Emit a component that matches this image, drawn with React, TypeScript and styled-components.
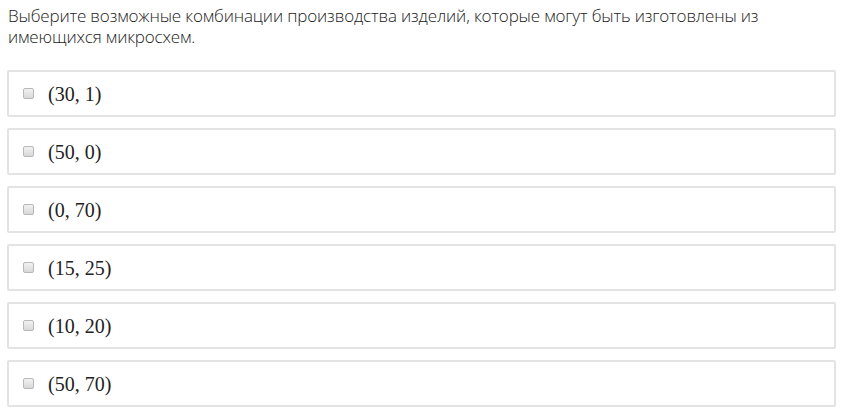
import React from "react";
import styled, { createGlobalStyle } from "styled-components";

const Global = createGlobalStyle`
  html, body { margin: 0; padding: 0; background: #fff; }
  body { font-family: "Open Sans", "Noto Sans", sans-serif; }
`;

const Page = styled.div`
  padding: 5px 6px 0 7px;
  width: 829px;
`;

const Question = styled.p`
  margin: 0 0 0 1px;
  font-size: 17px;
  font-weight: 300;
  line-height: 21px;
  letter-spacing: -0.15px;
  color: #222;
`;

const Options = styled.div`
  margin-top: 23px;
  display: flex;
  flex-direction: column;
  gap: 11px;
`;

const Option = styled.label`
  display: flex;
  align-items: center;
  height: 43px;
  border: 2px solid #e3e3e3;
  border-radius: 2px;
  padding-left: 14px;
  background: #fff;
`;

const Box = styled.span`
  width: 9px;
  height: 9px;
  border: 1px solid #b8b8b8;
  border-radius: 2px;
  background: linear-gradient(#f2f2f2, #d8d8d8);
  flex: none;
`;

const Math = styled.span`
  margin-left: 14px;
  font-family: "Liberation Serif", "DejaVu Serif", serif;
  font-size: 20px;
  color: #222;
  position: relative;
  top: 1px;
`;

const items = ["(30, 1)", "(50, 0)", "(0, 70)", "(15, 25)", "(10, 20)", "(50, 70)"];

export default function App() {
  return (
    <>
      <Global />
      <Page>
        <Question>
          Выберите возможные комбинации производства изделий, которые могут быть изготовлены из имеющихся микросхем.
        </Question>
        <Options>
          {items.map((t) => (
            <Option key={t}>
              <Box />
              <Math>{t}</Math>
            </Option>
          ))}
        </Options>
      </Page>
    </>
  );
}
